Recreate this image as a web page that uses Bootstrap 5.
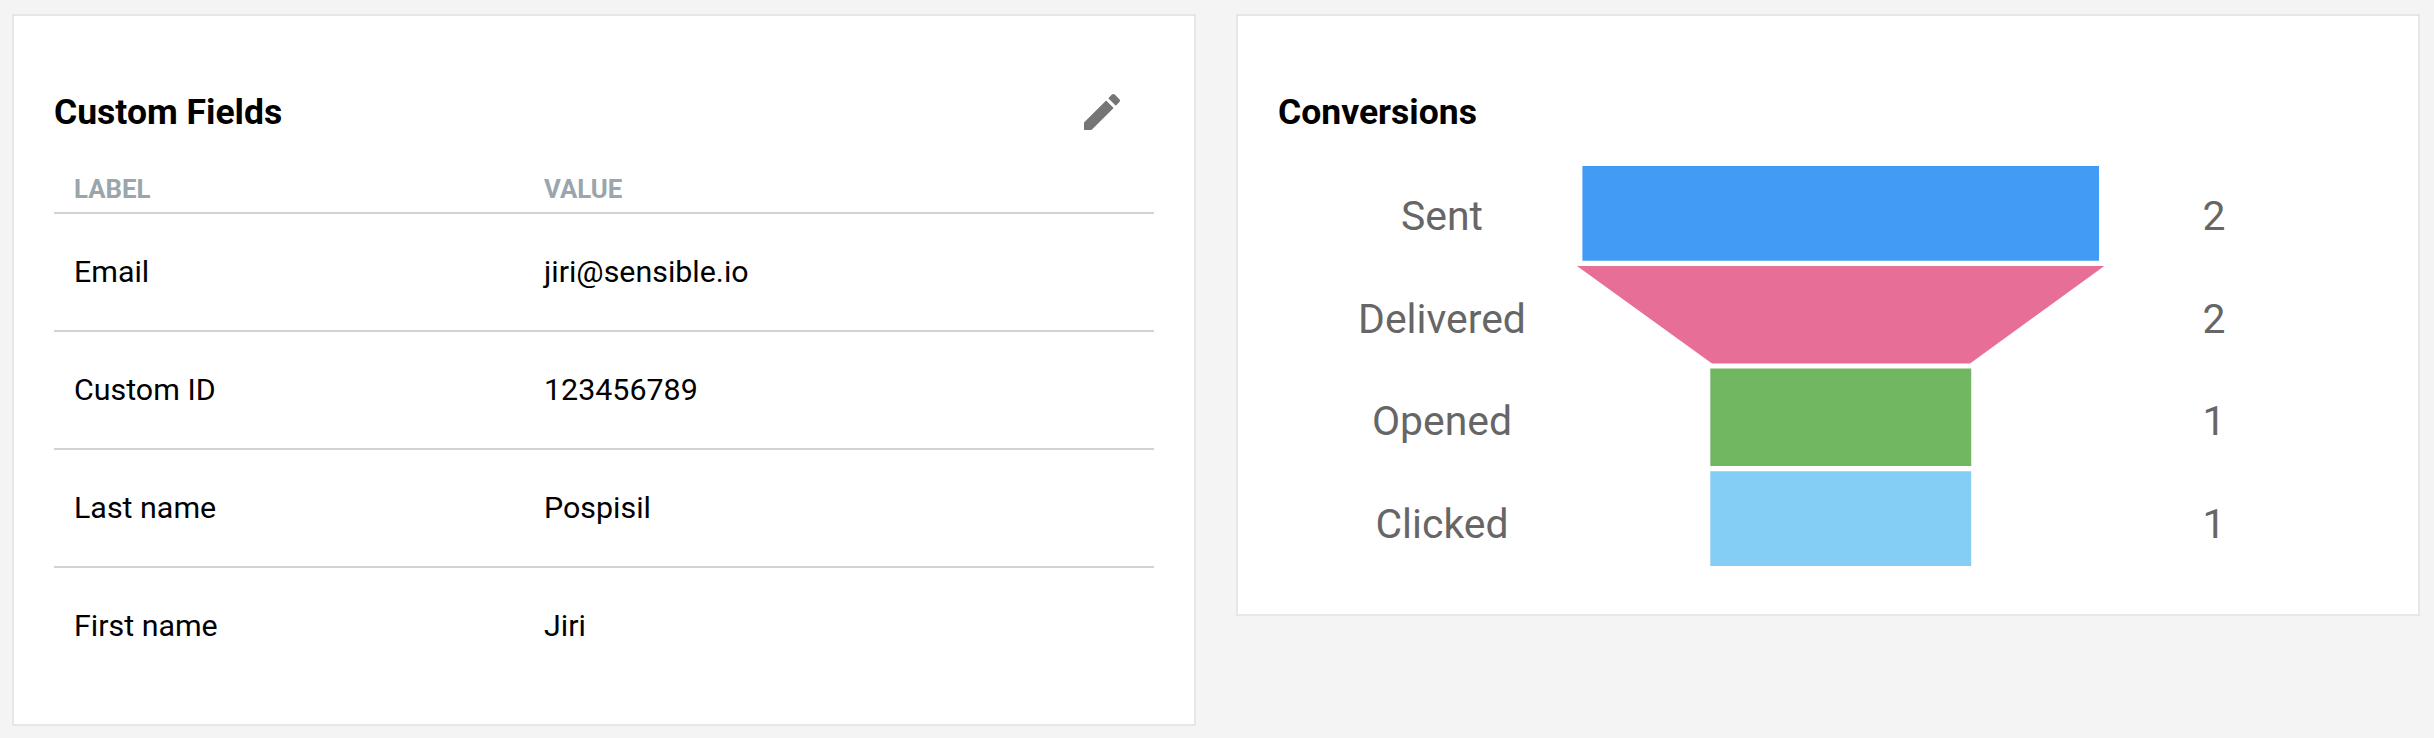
<!DOCTYPE html>
<html lang="en">
<head>
<meta charset="utf-8">
<title>Contact overview</title>
<link rel="stylesheet" href="https://cdn.jsdelivr.net/npm/bootstrap@5.3.0/dist/css/bootstrap.min.css">
<style>
body { background: #f4f4f4; font-family: Roboto, sans-serif; color: #000; font-size: 30.4px; line-height: 36px; overflow: hidden; }
.page { padding: 14px 14px 12px 12px; gap: 40px; }
.panel { flex: 1 1 0; border: 2px solid #e7e7e7; border-radius: 0; padding: 40px; background: #fff; color: #000; }
.panel-head { height: 112px; padding: 32px 28px 0 0; }
.panel-title { font-size: 35.5px; line-height: 44px; font-weight: 700; margin: 0; padding-top: 2px; }
.edit-btn { width: 48px; height: 48px; color: #757575; border: 0; padding: 0; background: none; display: block; }
.fields { margin: 0; table-layout: fixed; border-collapse: separate; border-spacing: 0; color: #000; --bs-table-bg: #fff; --bs-table-color: #000; }
.fields > thead > tr > th { height: 46px; padding: 0 20px 5px; font-size: 25.8px; line-height: 36px; font-weight: 700; color: #9aa5ac; border-bottom: 2px solid #d3d3d3; }
.fields > tbody > tr > td { height: 118px; padding: 0 20px; vertical-align: middle; border-bottom: 2px solid #d3d3d3; }
.fields > tbody > tr:last-child > td { height: 116px; border-bottom: 0; }
.fields th:first-child { width: 470px; }
.funnel { margin: -3px 0 0 29px; height: 409px; color: #666; font-size: 40.9px; }
.funnel-labels { width: 270px; }
.funnel-counts { width: 220px; }
.funnel-step { height: 102.5px; display: flex; align-items: center; justify-content: center; line-height: 48px; }
.funnel-shape { width: 527px; height: 402px; }
</style>
</head>
<body>
<main class="page d-flex align-items-start">
  <section class="card panel">
    <div class="panel-head d-flex justify-content-between align-items-start">
      <h2 class="panel-title">Custom Fields</h2>
      <button class="edit-btn" type="button" aria-label="Edit">
        <svg class="d-block" width="48" height="48" viewBox="0 0 24 24" fill="currentColor"><path d="M3 17.25V21h3.75L17.81 9.94l-3.75-3.75L3 17.25zM20.71 7.04a1 1 0 0 0 0-1.41l-2.34-2.34a1 1 0 0 0-1.41 0l-1.83 1.83 3.75 3.75 1.83-1.83z"/></svg>
      </button>
    </div>
    <table class="table fields">
      <thead><tr><th>LABEL</th><th>VALUE</th></tr></thead>
      <tbody>
        <tr><td>Email</td><td>jiri@sensible.io</td></tr>
        <tr><td>Custom ID</td><td>123456789</td></tr>
        <tr><td>Last name</td><td>Pospisil</td></tr>
        <tr><td>First name</td><td>Jiri</td></tr>
      </tbody>
    </table>
  </section>
  <section class="card panel">
    <div class="panel-head">
      <h2 class="panel-title">Conversions</h2>
    </div>
    <div class="funnel d-flex align-items-start">
      <div class="funnel-labels">
        <div class="funnel-step">Sent</div>
        <div class="funnel-step">Delivered</div>
        <div class="funnel-step">Opened</div>
        <div class="funnel-step">Clicked</div>
      </div>
      <svg class="funnel-shape" viewBox="0 -1 527 402">
        <path fill="#429cf6" d="M5.4 0H522v94.7H5.4z"/>
        <path fill="#e66e97" d="M0 100H527.3L393 197.4H135z"/>
        <path fill="#71b761" d="M133.3 202.4H394.2V300H133.3z"/>
        <path fill="#84cef6" d="M133.3 305.2H394.2V400H133.3z"/>
      </svg>
      <div class="funnel-counts">
        <div class="funnel-step">2</div>
        <div class="funnel-step">2</div>
        <div class="funnel-step">1</div>
        <div class="funnel-step">1</div>
      </div>
    </div>
  </section>
</main>
<script src="https://cdn.jsdelivr.net/npm/bootstrap@5.3.0/dist/js/bootstrap.bundle.min.js"></script>
</body>
</html>
